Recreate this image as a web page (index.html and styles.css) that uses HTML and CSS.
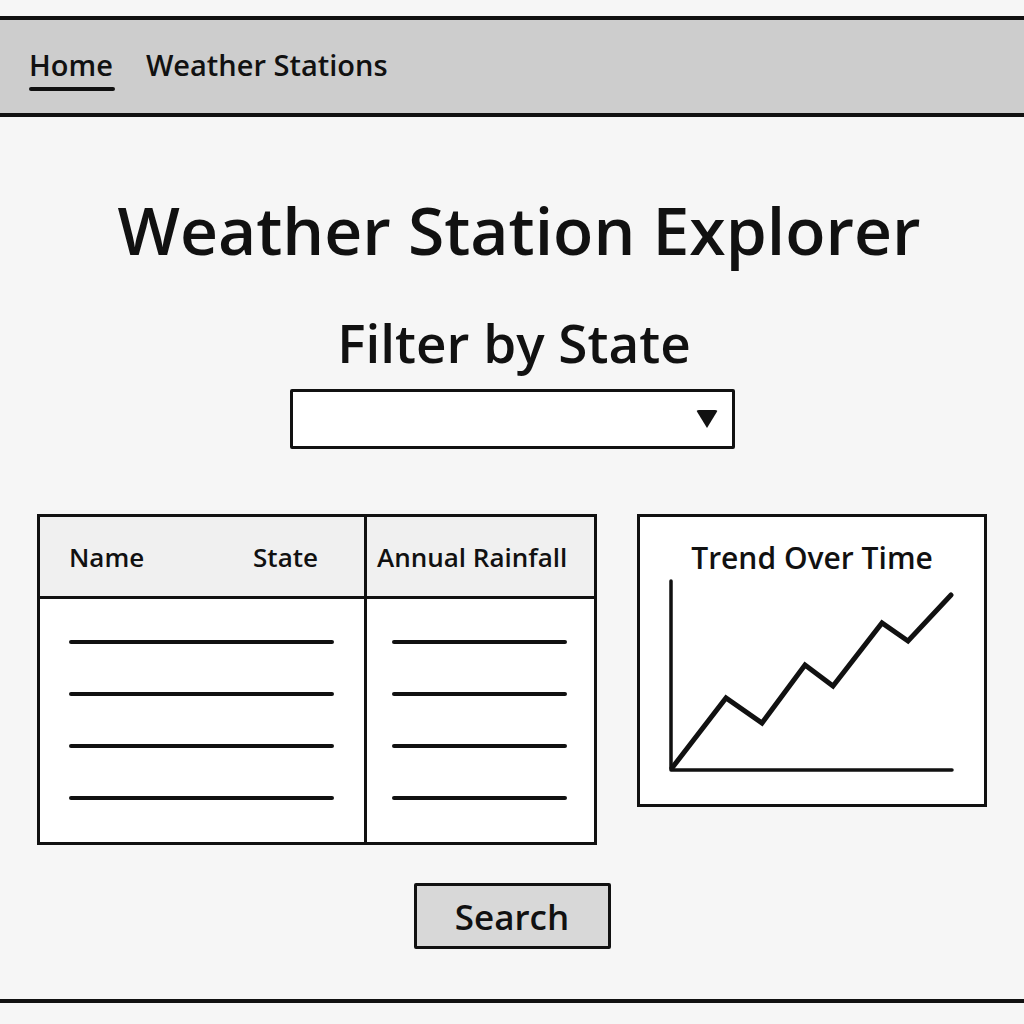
FILE: index.html
```html
<!DOCTYPE html>
<html>
<head>
<meta charset="utf-8">
<link rel="stylesheet" href="styles.css">
</head>
<body>
<nav class="nav">
  <a class="nav-link active">Home</a>
  <a class="nav-link">Weather Stations</a>
</nav>
<main class="main">
  <h1 class="title">Weather Station Explorer</h1>
  <h2 class="subtitle">Filter by State</h2>
  <div class="select"><span class="caret"></span></div>
  <section class="content">
    <div class="table">
      <div class="col col-left">
        <div class="head head-split"><span>Name</span><span>State</span></div>
        <div class="body">
          <div class="line"></div><div class="line"></div><div class="line"></div><div class="line"></div>
        </div>
      </div>
      <div class="col col-right">
        <div class="head">Annual Rainfall</div>
        <div class="body">
          <div class="line"></div><div class="line"></div><div class="line"></div><div class="line"></div>
        </div>
      </div>
    </div>
    <div class="chart">
      <div class="chart-title">Trend Over Time</div>
      <svg class="chart-svg" width="344" height="287" viewBox="0 0 344 287">
        <g fill="none" stroke="#111" stroke-width="3.5" stroke-linecap="round" stroke-linejoin="round">
          <path d="M31 64 L31 253 L312 253"/>
        </g>
        <g fill="none" stroke="#111" stroke-width="5" stroke-linecap="round" stroke-linejoin="miter">
          <polyline points="32,251 86,181 122,206 165,148 193,169 242,106 268,124 311,78"/>
        </g>
      </svg>
    </div>
  </section>
  <button class="btn">Search</button>
</main>
<footer class="foot"></footer>
</body>
</html>
```
FILE: styles.css
```css
* { box-sizing: border-box; }
html, body { margin: 0; padding: 0; }
body {
  width: 1024px;
  height: 1024px;
  background: #f6f6f6;
  font-family: "Open Sans", "Noto Sans", sans-serif;
  color: #111;
  padding-top: 16px;
  overflow: hidden;
}
.nav {
  height: 101px;
  background: #cdcdcd;
  border-top: 4px solid #111;
  border-bottom: 4px solid #111;
  display: flex;
  align-items: center;
  gap: 33px;
  padding-left: 29px;
  padding-bottom: 4px;
}
.nav-link {
  font-size: 29px;
  font-weight: 600;
  position: relative;
}
.nav-link.active::after {
  content: "";
  position: absolute;
  left: 0;
  right: -2px;
  bottom: -7px;
  height: 4px;
  border-radius: 3px;
  background: #111;
}
.main {
  display: flex;
  flex-direction: column;
  align-items: center;
}
.title {
  margin: 76px 0 0 14px;
  font-size: 66px;
  font-weight: 600;
  line-height: 72px;
}
.subtitle {
  margin: 48px 0 0 4px;
  font-size: 53px;
  font-weight: 600;
  line-height: 60px;
}
.select {
  margin-top: 16px;
  width: 445px;
  height: 60px;
  background: #fff;
  border: 3px solid #111;
  border-radius: 2px;
  display: flex;
  align-items: center;
  justify-content: flex-end;
  padding-right: 14px;
}
.caret {
  width: 0; height: 0;
  border-left: 11px solid transparent;
  border-right: 11px solid transparent;
  border-top: 18px solid #111;
  border-radius: 3px;
}
.content {
  margin-top: 65px;
  width: 950px;
  display: grid;
  grid-template-columns: 560px 350px;
  justify-content: space-between;
  align-items: start;
}
.table {
  display: grid;
  grid-template-columns: 327px 1fr;
  border: 3px solid #111;
  height: 331px;
  background: #fff;
}
.col-left { border-right: 3px solid #111; }
.col { display: flex; flex-direction: column; }
.head {
  height: 82px;
  background: #f0f0f0;
  border-bottom: 3px solid #111;
  display: flex;
  align-items: center;
  font-size: 26px;
  font-weight: 600;
  padding-left: 10px;
}
.head-split {
  justify-content: space-between;
  padding-left: 29px;
  padding-right: 46px;
}
.body {
  flex: 1;
  display: flex;
  flex-direction: column;
  gap: 48px;
  padding: 41px 0 0 29px;
}
.col-left .body { padding-right: 30px; }
.col-right .body { padding-left: 25px; padding-right: 27px; }
.line {
  height: 4px;
  border-radius: 2px;
  background: #111;
}
.chart {
  height: 293px;
  border: 3px solid #111;
  background: #fff;
  position: relative;
}
.chart-title {
  text-align: center;
  font-size: 30px;
  font-weight: 600;
  margin-top: 20px;
}
.chart-svg {
  position: absolute;
  left: 0;
  top: 0;
}
.btn {
  margin-top: 38px;
  width: 197px;
  height: 66px;
  background: #d8d8d8;
  border: 3px solid #111;
  border-radius: 2px;
  font-family: inherit;
  font-size: 35px;
  font-weight: 600;
  color: #111;
  padding: 0;
}
.foot {
  position: absolute;
  left: 0;
  top: 999px;
  width: 1024px;
  border-top: 4px solid #111;
}
```
